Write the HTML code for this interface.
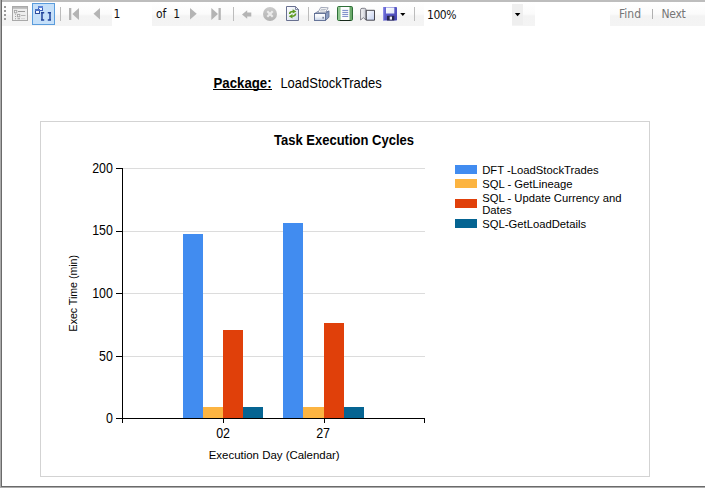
<!DOCTYPE html>
<html>
<head>
<meta charset="utf-8">
<title>Report Viewer</title>
<style>
html,body{margin:0;padding:0;}
body{width:705px;height:488px;overflow:hidden;background:#fff;position:relative;font-family:"Liberation Sans",sans-serif;}
#frame-top{position:absolute;left:0;top:0;width:705px;height:2px;background:#bdbdbd;}
#frame-left{position:absolute;left:0;top:0;width:1px;height:488px;background:#ababab;}
#frame-left2{position:absolute;left:1px;top:0;width:1px;height:487px;background:#6a6a6a;}
#frame-bot{position:absolute;left:1px;top:486px;width:704px;height:1px;background:#6a6a6a;}
#frame-bot2{position:absolute;left:0;top:487px;width:705px;height:1px;background:#ababab;}
#toolbar{position:absolute;left:2px;top:2px;width:703px;height:24px;background:linear-gradient(#ffffff 0%,#fbfbfb 50%,#f3f3f3 58%,#f4f4f4 100%);}
.tb{position:absolute;font-family:"DejaVu Sans Condensed","DejaVu Sans",sans-serif;font-size:11px;color:#111;white-space:nowrap;line-height:12px;}
.inp{position:absolute;background:#fff;}
.sep{position:absolute;width:1px;top:7px;height:14px;background:#bcbcbc;}
#ico{position:absolute;left:0;top:0;}
#chart{position:absolute;left:0;top:0;}
.hdr{position:absolute;white-space:nowrap;font-size:13.33px;line-height:15px;color:#000;}
</style>
</head>
<body>
<div id="toolbar"></div>
<div class="inp" style="left:112px;top:2px;width:40px;height:24px;"></div>
<div class="inp" style="left:424px;top:2px;width:88px;height:24px;"></div>
<div class="inp" style="left:512px;top:4px;width:11px;height:21px;background:#efefef;"></div>
<div class="inp" style="left:535px;top:2px;width:75px;height:24px;"></div>
<div class="sep" style="left:60px;"></div>
<div class="sep" style="left:233px;"></div>
<div class="sep" style="left:308px;"></div>
<div class="sep" style="left:414px;"></div>
<div class="sep" style="left:652px;top:9px;height:10px;background:#b0b0b0;"></div>
<svg id="ico" width="705" height="30" viewBox="0 0 705 30">
  <defs>
    <linearGradient id="gstop" x1="0" y1="0" x2="0" y2="1"><stop offset="0" stop-color="#cbcbcb"/><stop offset="1" stop-color="#b2b2b2"/></linearGradient>
    <linearGradient id="gpage" x1="0" y1="0" x2="1" y2="1"><stop offset="0" stop-color="#ffffff"/><stop offset="1" stop-color="#d3dcec"/></linearGradient>
    <linearGradient id="gprn" x1="0" y1="0" x2="0" y2="1"><stop offset="0" stop-color="#ffffff"/><stop offset="0.450" stop-color="#f2f5fa"/><stop offset="1" stop-color="#c4d0e6"/></linearGradient>
    <linearGradient id="gpg1" x1="0" y1="0" x2="1" y2="0"><stop offset="0" stop-color="#fafafa"/><stop offset="1" stop-color="#c6c8d2"/></linearGradient>
    <linearGradient id="gpg2" x1="0" y1="0" x2="1" y2="1"><stop offset="0" stop-color="#ffffff"/><stop offset="1" stop-color="#c2cff0"/></linearGradient>
    <linearGradient id="gsave" x1="0" y1="0" x2="1" y2="1"><stop offset="0" stop-color="#6e6edc"/><stop offset="1" stop-color="#4242ae"/></linearGradient>
    <linearGradient id="glabel" x1="0" y1="0" x2="1" y2="1"><stop offset="0" stop-color="#ffffff"/><stop offset="1" stop-color="#dfe6f6"/></linearGradient>
  </defs>
  <!-- gripper -->
  <g fill="#9a9a9a">
    <rect x="4" y="6" width="2" height="2"/><rect x="4" y="10" width="2" height="2"/>
    <rect x="4" y="14" width="2" height="2"/><rect x="4" y="18" width="2" height="2"/>
  </g>
  <!-- doc map (disabled) -->
  <g>
    <rect x="12.500" y="6.500" width="15" height="14" fill="#eeeeee" stroke="#a9a9a9"/>
    <rect x="13" y="7" width="14" height="1.800" fill="#b9b9b9"/>
    <rect x="14.400" y="10.400" width="2.400" height="2.400" fill="#f4f4f4" stroke="#a4a4a4" stroke-width="0.900"/>
    <rect x="18" y="11" width="7" height="1" fill="#9c9c9c"/>
    <rect x="17.400" y="14.400" width="2.400" height="2.400" fill="#f4f4f4" stroke="#a4a4a4" stroke-width="0.900"/>
    <rect x="21" y="15" width="4.500" height="1" fill="#b4b4b4"/>
    <rect x="15" y="13.700" width="1" height="1" fill="#a0a0a0"/><rect x="15" y="16" width="1" height="1" fill="#a0a0a0"/><rect x="15" y="18.200" width="1" height="1" fill="#a0a0a0"/>
    <rect x="17.500" y="18" width="2.500" height="1.300" fill="#b0b0b0"/>
    <rect x="21" y="18.300" width="4" height="0.800" fill="#cfcfcf"/>
  </g>
  <!-- selected button -->
  <rect x="32.500" y="3.500" width="22" height="21" fill="#c6e0f9" stroke="#5a9cdc"/>
  <g>
    <rect x="38.500" y="6.500" width="4" height="4" fill="#f4f7fd" stroke="#3d5fb8"/>
    <rect x="38" y="6" width="5" height="2" fill="#5a82d6"/>
    <rect x="35.500" y="9.500" width="4" height="4" fill="#f4f7fd" stroke="#2f4e9e"/>
    <rect x="35" y="9" width="5" height="2" fill="#4a72c6"/>
    <path d="M42 12V20.700M41 12.700h3.200M41 20h3.200" stroke="#21439a" stroke-width="1.500" stroke-linecap="butt" fill="none"/>
    <path d="M50 12V20.700M51 12.700h-3.200M51 20h-3.200" stroke="#21439a" stroke-width="1.500" fill="none"/>
  </g>
  <!-- first -->
  <g fill="#b4b4b4">
    <rect x="69" y="8" width="2.300" height="12"/>
    <path d="M79 8V20L72.300 14Z"/>
    <!-- prev -->
    <path d="M100 8V19.500L93.500 13.750Z"/>
    <!-- next -->
    <path d="M190 8V19.500L196.700 13.750Z"/>
    <!-- last -->
    <path d="M211.300 8V20L218 14Z"/>
    <rect x="218.500" y="8" width="2.300" height="12"/>
    <!-- back -->
    <path d="M242 14.500L247.200 10.300V12.400H251.300V16.600H247.200V18.700Z"/>
  </g>
  <!-- stop -->
  <circle cx="270" cy="14" r="7" fill="url(#gstop)"/>
  <path d="M267.300 11.300L272.700 16.700M272.700 11.300L267.300 16.700" stroke="#ececec" stroke-width="2.100"/>
  <!-- refresh -->
  <path d="M286.500 6.500H295.500L298.500 9.500V20.500H286.500Z" fill="url(#gpage)" stroke="#687090"/>
  <path d="M295.500 6.500V9.500H298.500Z" fill="#eef1f8" stroke="#687090" stroke-width="0.800"/>
  <g fill="none" stroke="#5b9a1e" stroke-width="1.500">
    <path d="M289.600 14Q289.700 11.400 293 11.400"/>
    <path d="M295.600 13.500Q295.500 16.200 292.200 16.200"/>
  </g>
  <path d="M292.700 9.200L296.400 11.400L292.700 13.600Z" fill="#5b9a1e"/>
  <path d="M292.500 14L288.800 16.200L292.500 18.400Z" fill="#5b9a1e"/>
  <!-- printer -->
  <g>
    <path d="M314.500 13.500L318 11.500H329L325.500 13.500Z" fill="#c3cde0" stroke="#5a6990" stroke-width="0.700"/>
    <path d="M325.500 13.500L329 10.800V17.200L325.500 20.500Z" fill="#8a9cc0" stroke="#5a6990" stroke-width="0.800"/>
    <rect x="314.500" y="13.500" width="11" height="7" fill="url(#gprn)" stroke="#5a6990" stroke-width="0.900"/>
    <path d="M317.800 12.600L320.800 7.400L328.200 7.800L325.300 12.600Z" fill="#fbfbfb" stroke="#8b93a8" stroke-width="0.800"/>
    <path d="M320.800 9.300L325.800 9.500M320 10.900L325 11.100" stroke="#a3a9b8" stroke-width="0.800"/>
    <rect x="322.600" y="16.800" width="1" height="1.800" fill="#3a4666"/>
  </g>
  <!-- print layout -->
  <rect x="337.500" y="6.500" width="15" height="14" rx="1.200" fill="#6aa96a" stroke="#2f6f38"/>
  <rect x="338" y="7" width="2.500" height="13" fill="#8fc78f"/>
  <rect x="340.500" y="7" width="9" height="13.500" fill="#fdfdfd"/>
  <path d="M340 20.500H350.500" stroke="#16281a" stroke-width="1"/>
  <path d="M342.300 10.400H348.200M342.300 12.400H348.200M342.300 14.400H348.200M342.300 16.400H348.200" stroke="#7586c6" stroke-width="1"/>
  <!-- page setup -->
  <path d="M360.600 9.800Q360.600 8.300 362 8.300H364.600Q366 8.300 366 9.800V20L363.300 17.600L360.600 20Z" fill="url(#gpg1)" stroke="#74747e" stroke-width="0.900"/>
  <path d="M366.300 10.300H374.500V20.200H366.300Z" fill="url(#gpg2)" stroke="#34343c" stroke-width="0.900"/>
  <!-- save -->
  <rect x="383" y="7" width="14" height="13.500" rx="0.800" fill="url(#gsave)"/>
  <rect x="383" y="7" width="1.200" height="13.500" fill="#8a8ae6"/>
  <rect x="386" y="7.500" width="8.300" height="6" fill="url(#glabel)"/>
  <rect x="387" y="15.800" width="7.300" height="4.700" fill="#26264e"/>
  <rect x="389.700" y="16.600" width="2.300" height="3" fill="#eeeef6"/>
  <path d="M400.200 13H405.400L402.800 16Z" fill="#000"/>
  <path d="M514.800 13H520.400L517.600 16.200Z" fill="#000"/>
  <g font-family="'DejaVu Sans Condensed','DejaVu Sans',sans-serif" font-size="12" fill="#111">
    <text x="113.5" y="18">1</text>
    <text x="156" y="18">of</text>
    <text x="173.300" y="18">1</text>
    <text x="427" y="19" letter-spacing="-0.45">100%</text>
    <text x="619" y="18" fill="#767676">Find</text>
    <text x="661.500" y="18" fill="#767676" letter-spacing="-0.300">Next</text>
  </g>
</svg>

<svg id="chart" width="705" height="488" viewBox="0 0 705 488" font-family="'Liberation Sans',sans-serif">
  <rect x="40.500" y="121.500" width="609" height="355" fill="#fff" stroke="#d3d3d3"/>
  <text transform="translate(344,145) scale(0.930,1)" font-size="14" font-weight="bold" text-anchor="middle" fill="#000">Task Execution Cycles</text>
  <text transform="translate(213.500,88) scale(0.946,1)" font-size="14" font-weight="bold" fill="#000">Package:</text>
  <rect x="213" y="89" width="59" height="1" fill="#000"/>
  <text transform="translate(280.400,88) scale(0.928,1)" font-size="14" fill="#000">LoadStockTrades</text>
  <!-- gridlines -->
  <g stroke="#dcdcdc" stroke-width="1">
    <path d="M123 168.500H425M123 231.500H425M123 293.500H425M123 356.500H425"/>
  </g>
  <!-- bars -->
  <g shape-rendering="crispEdges">
    <rect x="183" y="234" width="20" height="184" fill="#418cf0"/>
    <rect x="203" y="407" width="20" height="11" fill="#fcb441"/>
    <rect x="223" y="330" width="20" height="88" fill="#e0400a"/>
    <rect x="243" y="407" width="20" height="11" fill="#056492"/>
    <rect x="283" y="223" width="20" height="195" fill="#418cf0"/>
    <rect x="303" y="407" width="21" height="11" fill="#fcb441"/>
    <rect x="324" y="323" width="20" height="95" fill="#e0400a"/>
    <rect x="344" y="407" width="20" height="11" fill="#056492"/>
  </g>
  <!-- axes -->
  <g stroke="#000" stroke-width="1" shape-rendering="crispEdges">
    <path d="M122.500 168V423"/>
    <path d="M116 418.500H425"/>
    <path d="M116 168.500H122M116 231.500H122M116 293.500H122M116 356.500H122"/>
    <path d="M223.500 418V423M324.500 418V423M424.500 418V423"/>
  </g>
  <g font-size="14" fill="#000" text-anchor="end" transform="translate(112.800,0) scale(0.885,1)">
    <text x="0" y="173">200</text>
    <text x="0" y="235">150</text>
    <text x="0" y="298">100</text>
    <text x="0" y="361">50</text>
    <text x="0" y="423">0</text>
  </g>
  <g font-size="14" fill="#000" text-anchor="middle">
    <text transform="translate(223.100,438) scale(0.890,1)">02</text>
    <text transform="translate(323.100,438) scale(0.890,1)">27</text>
  </g>
  <text transform="translate(274.200,459) scale(1.040,1)" font-size="11" text-anchor="middle" fill="#000">Execution Day (Calendar)</text>
  <text transform="translate(77,293.200) rotate(-90) scale(0.962,1)" font-size="11" text-anchor="middle" fill="#000">Exec Time (min)</text>
  <!-- legend -->
  <g shape-rendering="crispEdges">
    <rect x="455" y="165" width="22" height="9" fill="#418cf0"/>
    <rect x="455" y="179" width="22" height="9" fill="#fcb441"/>
    <rect x="455" y="199" width="22" height="9" fill="#e0400a"/>
    <rect x="455" y="219" width="22" height="9" fill="#056492"/>
  </g>
  <g font-size="11" fill="#000" transform="translate(482.200,0) scale(1.026,1)">
    <text x="0" y="174">DFT -LoadStockTrades</text>
    <text x="0" y="188">SQL - GetLineage</text>
    <text x="0" y="202">SQL - Update Currency and</text>
    <text x="0" y="214">Dates</text>
    <text x="0" y="228">SQL-GetLoadDetails</text>
  </g>
</svg>

<div id="frame-top"></div>
<div id="frame-left"></div>
<div id="frame-left2"></div>
<div id="frame-bot"></div>
<div id="frame-bot2"></div>
</body>
</html>
